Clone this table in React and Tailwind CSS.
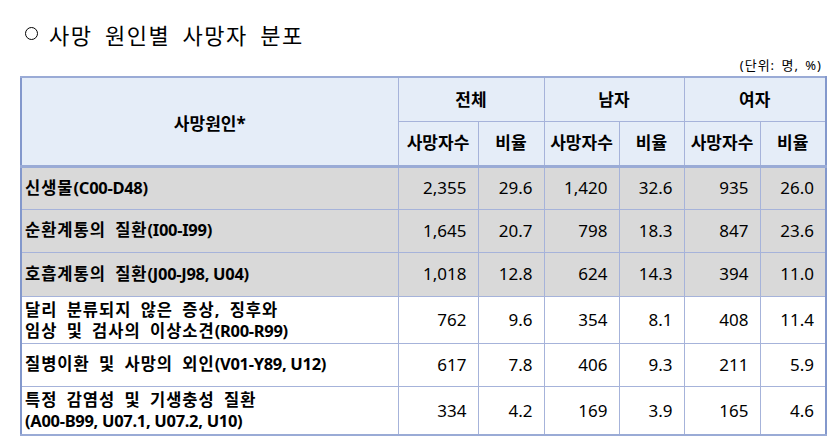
const rows = [
  { label: ["신생물", "(C00-D48)"], gray: true, h: "h-[43px]", v: ["2,355", "29.6", "1,420", "32.6", "935", "26.0"] },
  { label: ["순환계통의 질환", "(I00-I99)"], gray: true, h: "h-[43px]", v: ["1,645", "20.7", "798", "18.3", "847", "23.6"] },
  { label: ["호흡계통의 질환", "(J00-J98, U04)"], gray: true, h: "h-[44px]", v: ["1,018", "12.8", "624", "14.3", "394", "11.0"] },
  { label: ["달리 분류되지 않은 증상, 징후와", null, "임상 및 검사의 이상소견", "(R00-R99)"], h: "h-[47px]", v: ["762", "9.6", "354", "8.1", "408", "11.4"] },
  { label: ["질병이환 및 사망의 외인", "(V01-Y89, U12)"], h: "h-[43px]", v: ["617", "7.8", "406", "9.3", "211", "5.9"] },
  { label: ["특정 감염성 및 기생충성 질환", null, "", "(A00-B99, U07.1, U07.2, U10)"], h: "h-[49px]", v: ["334", "4.2", "169", "3.9", "165", "4.6"] },
]

function Label({ parts }) {
  if (parts.length === 2) {
    return (
      <span>
        <span className="tracking-[1px] [word-spacing:4px]">{parts[0]}</span>
        <span className="font-bold tracking-[-0.3px]">{parts[1]}</span>
      </span>
    )
  }
  return (
    <span className="block leading-[21px]">
      <span className="block tracking-[1px] [word-spacing:4px]">{parts[0]}</span>
      <span className="block">
        <span className="tracking-[1px] [word-spacing:4px]">{parts[2]}</span>
        <span className="font-bold tracking-[-0.3px]">{parts[3]}</span>
      </span>
    </span>
  )
}

export default function App() {
  const cell = "border border-[#a6b3da]"
  return (
    <div className="w-[838px] h-[444px] bg-white text-black font-['Noto_Sans','Noto_Sans_CJK_KR',sans-serif] overflow-hidden">
      <div className="pt-[21px] pl-[25px] flex items-center gap-[11px] h-[46px]">
        <span className="inline-block w-[13px] h-[13px] rounded-full border border-black"></span>
        <span className="text-[22px] tracking-[1.5px] [word-spacing:6px] font-['Noto_Sans_CJK_KR',serif] leading-none">사망 원인별 사망자 분포</span>
      </div>
      <div className="flex justify-end pr-[16px] text-[13px] leading-none mt-[13px] mb-[4px] tracking-[1px] [word-spacing:2px]">(단위: 명, %)</div>
      <table className="ml-[20px] border-collapse table-fixed border-l-2 border-r-2 border-[#8398cc]">
        <colgroup>
          <col className="w-[377px]" />
          <col className="w-[80px]" />
          <col className="w-[66px]" />
          <col className="w-[75px]" />
          <col className="w-[65px]" />
          <col className="w-[76px]" />
          <col className="w-[66px]" />
        </colgroup>
        <thead className="bg-[#e5edf8] font-bold text-[17px]">
          <tr className="h-[44px]">
            <th rowSpan={2} className={`${cell} border-l-2 border-l-[#8398cc] border-t-2 border-t-[#9aabd6] border-b-[3px] border-b-[#9aabd6] font-bold pt-[4px]`}>사망원인*</th>
            <th colSpan={2} className={`${cell} border-t-2 border-t-[#9aabd6] font-bold`}>전체</th>
            <th colSpan={2} className={`${cell} border-t-2 border-t-[#9aabd6] font-bold`}>남자</th>
            <th colSpan={2} className={`${cell} border-t-2 border-t-[#9aabd6] border-r-2 border-r-[#8398cc] font-bold`}>여자</th>
          </tr>
          <tr className="h-[45px]">
            {["사망자수", "비율", "사망자수", "비율", "사망자수", "비율"].map((t, i) => (
              <th key={i} className={`${cell} border-b-[3px] border-b-[#9aabd6] font-bold ${i === 5 ? "border-r-2 border-r-[#8398cc]" : ""}`}>{t}</th>
            ))}
          </tr>
        </thead>
        <tbody className="text-[17px]">
          {rows.map((r, ri) => (
            <tr key={ri} className={`${r.h} ${r.gray ? "bg-[#d9d9d9]" : "bg-white"}`}>
              <td className={`${cell} border-l-2 border-l-[#8398cc] pl-[3px] font-bold text-[16.5px] leading-tight ${ri === rows.length - 1 ? "border-b-2 border-b-[#9aabd6]" : ""}`}>
                <Label parts={r.label} />
              </td>
              {r.v.map((v, i) => (
                <td key={i} className={`${cell} text-right pr-[11px] ${i === 5 ? "border-r-2 border-r-[#8398cc]" : ""} ${ri === rows.length - 1 ? "border-b-2 border-b-[#9aabd6]" : ""}`}>{v}</td>
              ))}
            </tr>
          ))}
        </tbody>
      </table>
    </div>
  )
}
